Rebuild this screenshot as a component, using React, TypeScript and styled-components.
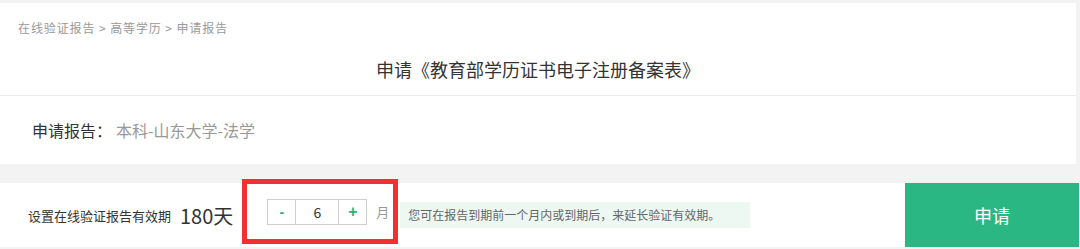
import React from "react";
import styled, { createGlobalStyle } from "styled-components";

const Global = createGlobalStyle`
  html, body { margin: 0; padding: 0; }
  body {
    background: #f3f3f3;
    font-family: "Noto Sans CJK SC", "Noto Sans", "Liberation Sans", sans-serif;
    color: #333;
  }
`;

const Page = styled.div`
  width: 1080px;
  height: 249px;
  padding-top: 3px;
  box-sizing: border-box;
  overflow: hidden;
`;

const HeaderPanel = styled.div`
  width: 1076px;
  height: 93px;
  box-sizing: border-box;
  background: #fff;
  border-bottom: 1px solid #ebebeb;
  padding: 16px 18px 0;
  display: flex;
  flex-direction: column;
`;

const Crumbs = styled.div`
  font-size: 12px;
  line-height: 18px;
  color: #999;
  letter-spacing: 0.9px;
`;

const Title = styled.h1`
  margin: 18px 0 0;
  font-size: 18px;
  font-weight: 400;
  line-height: 28px;
  color: #333;
  text-align: center;
`;

const InfoPanel = styled.div`
  width: 1076px;
  height: 68px;
  background: #fff;
  display: flex;
  align-items: center;
  padding-left: 32px;
  box-sizing: border-box;
  font-size: 16px;
`;

const Label = styled.span`
  color: #333;
`;

const Value = styled.span`
  color: #999;
  margin-left: 4px;
`;

const Bar = styled.div`
  margin-top: 19px;
  width: 1079px;
  height: 64px;
  background: #fff;
  display: flex;
  align-items: center;
  padding-left: 28px;
  box-sizing: border-box;
`;

const BarLabel = styled.span`
  font-size: 13px;
  color: #333;
`;

const Days = styled.span`
  font-size: 20px;
  color: #333;
  margin-left: 9px;
`;

const Highlight = styled.div`
  align-self: flex-start;
  margin-top: -4px;
  margin-left: 9px;
  width: 156px;
  height: 65px;
  box-sizing: border-box;
  border: 5px solid #ef3131;
  display: flex;
  align-items: center;
  padding-left: 20px;
`;

const Stepper = styled.div`
  display: flex;
  height: 26px;
  border: 1px solid #cfcfcf;
  box-sizing: border-box;
`;

const StepBtn = styled.button<{ $bold?: boolean }>`
  width: 27px;
  height: 100%;
  padding: 0;
  border: none;
  background: #fff;
  color: #2bb27c;
  font-size: ${(p) => (p.$bold ? "16px" : "14px")};
  font-weight: 700;
  font-family: "Liberation Sans", sans-serif;
  line-height: 24px;
`;

const StepValue = styled.div`
  width: 42px;
  border-left: 1px solid #cfcfcf;
  border-right: 1px solid #cfcfcf;
  text-align: center;
  font-size: 14px;
  line-height: 24px;
  color: #333;
`;

const Unit = styled.span`
  margin-left: 9px;
  font-size: 13px;
  color: #999;
`;

const Tip = styled.div`
  margin-left: 2px;
  width: 350px;
  height: 26px;
  background: #eef8f3;
  font-size: 12px;
  line-height: 26px;
  color: #666;
  padding-left: 8px;
  box-sizing: border-box;
`;

const Submit = styled.button`
  margin-left: auto;
  width: 174px;
  height: 64px;
  border: none;
  background: #2bb783;
  color: #fff;
  font-family: inherit;
  font-size: 18px;
`;

export default function App() {
  return (
    <>
      <Global />
      <Page>
        <HeaderPanel>
          <Crumbs>在线验证报告 &gt; 高等学历 &gt; 申请报告</Crumbs>
          <Title>申请《教育部学历证书电子注册备案表》</Title>
        </HeaderPanel>
        <InfoPanel>
          <Label>申请报告：</Label>
          <Value>本科-山东大学-法学</Value>
        </InfoPanel>
        <Bar>
          <BarLabel>设置在线验证报告有效期</BarLabel>
          <Days>180天</Days>
          <Highlight>
            <Stepper>
              <StepBtn>-</StepBtn>
              <StepValue>6</StepValue>
              <StepBtn $bold>+</StepBtn>
            </Stepper>
            <Unit>月</Unit>
          </Highlight>
          <Tip>您可在报告到期前一个月内或到期后，来延长验证有效期。</Tip>
          <Submit>申请</Submit>
        </Bar>
      </Page>
    </>
  );
}
